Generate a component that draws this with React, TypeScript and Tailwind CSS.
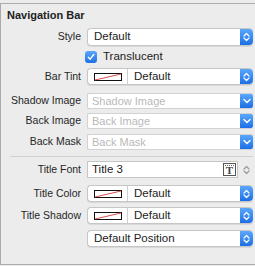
import type { ReactNode } from "react";

const font = { fontFamily: '"Liberation Sans", Arial, sans-serif' };

function UpDown({ color = "white" }: { color?: string }) {
  return (
    <svg width="7" height="10" viewBox="0 0 7 10" fill="none">
      <path d="M1 4 L3.5 1.5 L6 4" stroke={color} strokeWidth="1.2" strokeLinecap="round" strokeLinejoin="round" />
      <path d="M1 6 L3.5 8.5 L6 6" stroke={color} strokeWidth="1.2" strokeLinecap="round" strokeLinejoin="round" />
    </svg>
  );
}

function Down() {
  return (
    <svg width="8" height="6" viewBox="0 0 8 6" fill="none">
      <path d="M1 1.5 L4 4.5 L7 1.5" stroke="white" strokeWidth="1.4" strokeLinecap="round" strokeLinejoin="round" />
    </svg>
  );
}

function Row({ label, h, mt, children }: { label: string; h: string; mt: string; children: ReactNode }) {
  return (
    <div className={`flex items-center ${h} ${mt}`}>
      <div className="w-[81px] shrink-0 pr-[1px] text-right text-[10.5px] text-[#262626]">{label}</div>
      <div className="ml-[5px] flex h-full w-[166px]">{children}</div>
    </div>
  );
}

function BlueCap({ children, rounded = true }: { children: ReactNode; rounded?: boolean }) {
  return (
    <div
      className={`flex w-[13px] shrink-0 items-center justify-center bg-gradient-to-b from-[#5aa7fb] to-[#1b6fe6] ${
        rounded ? "rounded-r-[4px]" : "rounded-r-[2px]"
      }`}
    >
      {children}
    </div>
  );
}

function Popup({ text }: { text: string }) {
  return (
    <div className="flex h-full w-full rounded-[4px] border border-[#c6c6c6] border-r-0 bg-white shadow-[0_1px_0_rgba(0,0,0,0.08)]">
      <div className="flex flex-1 items-center pl-[6px] text-[11.5px] text-[#222]">{text}</div>
      <BlueCap>
        <UpDown />
      </BlueCap>
    </div>
  );
}

function ColorPopup() {
  return (
    <div className="flex h-full w-full rounded-[4px] border border-[#c6c6c6] border-r-0 bg-white shadow-[0_1px_0_rgba(0,0,0,0.08)]">
      <div className="flex w-[40px] shrink-0 items-center justify-center border-r border-[#d0d0d0]">
        <svg width="28" height="8" viewBox="0 0 28 8">
          <rect x="0.5" y="0.5" width="27" height="7" fill="white" stroke="#111" />
          <line x1="1" y1="7" x2="27" y2="1" stroke="#d23a3a" strokeWidth="0.9" />
        </svg>
      </div>
      <div className="flex flex-1 items-center pl-[6px] text-[11.5px] text-[#222]">Default</div>
      <BlueCap>
        <UpDown />
      </BlueCap>
    </div>
  );
}

function ImageField({ text }: { text: string }) {
  return (
    <div className="flex h-full w-full rounded-[2px] border border-[#d2d2d2] border-r-0 bg-white">
      <div className="flex flex-1 items-center pl-[4px] text-[11px] text-[#b9b9b9]">{text}</div>
      <BlueCap rounded={false}>
        <Down />
      </BlueCap>
    </div>
  );
}

export default function App() {
  return (
    <div className="h-[266px] w-[255px] overflow-hidden bg-[#ececec] pt-[3px]" style={font}>
      <div className="h-[262px] border-l border-t border-b border-[#aaaaaa] bg-[#ececec]">
        <div className="mt-[4px] h-[14px] pl-[6px] text-[11px] font-bold leading-[14px] text-[#222]">
          Navigation Bar
        </div>

        <Row label="Style" h="h-[18px]" mt="mt-[6px]">
          <Popup text="Default" />
        </Row>

        <div className="mt-[4px] flex h-[14px] items-center pl-[84px]">
          <div className="flex h-[12px] w-[12px] items-center justify-center rounded-[3px] bg-gradient-to-b from-[#5aa7fb] to-[#1b6fe6]">
            <svg width="8" height="8" viewBox="0 0 8 8" fill="none">
              <path d="M1.3 4.2 L3.2 6.2 L6.7 1.5" stroke="white" strokeWidth="1.4" strokeLinecap="round" strokeLinejoin="round" />
            </svg>
          </div>
          <span className="ml-[6px] text-[11.5px] text-[#222]">Translucent</span>
        </div>

        <Row label="Bar Tint" h="h-[17px]" mt="mt-[4px]">
          <ColorPopup />
        </Row>

        <Row label="Shadow Image" h="h-[16px]" mt="mt-[8px]">
          <ImageField text="Shadow Image" />
        </Row>
        <Row label="Back Image" h="h-[16px]" mt="mt-[4px]">
          <ImageField text="Back Image" />
        </Row>
        <Row label="Back Mask" h="h-[16px]" mt="mt-[5px]">
          <ImageField text="Back Mask" />
        </Row>

        <div className="ml-[9px] mt-[6px] h-px w-[243px] bg-[#cfcfcf]" />

        <Row label="Title Font" h="h-[17px]" mt="mt-[4px]">
          <div className="flex h-full w-[151px] items-center border border-[#c6c6c6] bg-white pl-[4px]">
            <span className="flex-1 text-[11.5px] text-[#222]">Title 3</span>
            <div className="relative mr-[1px] flex h-[13px] w-[13px] items-center justify-center border border-[#555] bg-white">
              <div className="absolute left-[1px] right-[1px] top-[1px] border-t border-dotted border-[#666]" />
              <span className="mt-[2px] text-[11px] font-bold leading-none text-[#444]" style={{ fontFamily: '"Liberation Serif", serif' }}>
                T
              </span>
            </div>
          </div>
          <div className="ml-[5px] flex h-full items-center">
            <UpDown color="#9a9a9a" />
          </div>
        </Row>

        <Row label="Title Color" h="h-[17px]" mt="mt-[7px]">
          <ColorPopup />
        </Row>
        <Row label="Title Shadow" h="h-[17px]" mt="mt-[5px]">
          <ColorPopup />
        </Row>

        <div className="mt-[6px] flex h-[17px] pl-[86px]">
          <div className="w-[166px]">
            <Popup text="Default Position" />
          </div>
        </div>
      </div>
    </div>
  );
}
